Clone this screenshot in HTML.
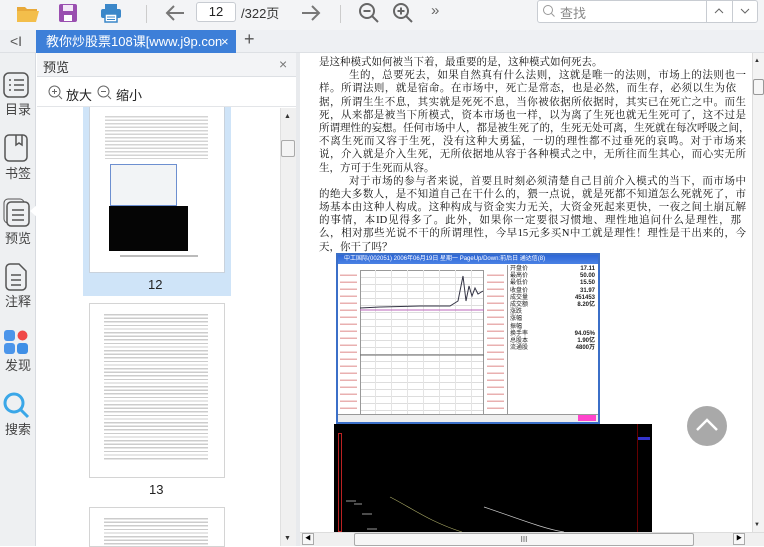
<!DOCTYPE html>
<html><head><meta charset="utf-8"><style>
*{margin:0;padding:0;box-sizing:border-box}
body{width:764px;height:546px;overflow:hidden;background:#fff;font-family:"Liberation Sans","Noto Sans CJK SC",sans-serif;position:relative}
.a{position:absolute}
.tb{left:0;top:0;width:764px;height:30px;background:#f3f4f6}
.tabbar{left:0;top:30px;width:764px;height:23px;background:#eef0f3;border-bottom:1px solid #dde0e4}
.side{left:0;top:53px;width:36px;height:493px;background:#eef0f2;border-right:1px solid #d8dbe0}
.lbl{font-size:13px;color:#444;width:36px;text-align:center;left:0}
.doc{font-family:"Liberation Serif","Noto Serif CJK SC",serif;font-size:10.5px;line-height:13.2px;color:#111;left:319px;top:56px;width:427px}
.doc div{white-space:nowrap;text-align:justify;text-align-last:justify;height:13.2px}
.doc div.s{text-align-last:left}
</style></head><body>
<div class="a tb"></div>
<svg class="a" style="left:16px;top:3px" width="24" height="20"><path d="M1 4h8l2 2h10v3H1z" fill="#e8a93a"/><path d="M1 8h22l-3 11H1z" fill="#f3be4b"/></svg>
<svg class="a" style="left:58px;top:3px" width="20" height="20"><rect x="1" y="1" width="18" height="18" rx="2" fill="#9a4fb0"/><rect x="5" y="2" width="10" height="6" fill="#f3e8f7"/><rect x="6" y="12" width="8" height="6" fill="#fff"/></svg>
<svg class="a" style="left:100px;top:3px" width="22" height="20"><rect x="5" y="1" width="12" height="5" fill="#3b87c9"/><rect x="1" y="6" width="20" height="9" rx="2" fill="#3b87c9"/><rect x="5" y="11" width="12" height="8" fill="#fff" stroke="#3b87c9" stroke-width="1.5"/><line x1="7" y1="14" x2="15" y2="14" stroke="#3b87c9"/><line x1="7" y1="16.5" x2="15" y2="16.5" stroke="#3b87c9"/></svg>
<div class="a" style="left:146px;top:5px;width:1px;height:18px;background:#ccc"></div>
<svg class="a" style="left:164px;top:3px" width="22" height="20"><path d="M20 10H3M10 3L3 10l7 7" fill="none" stroke="#777" stroke-width="2"/></svg>
<div class="a" style="left:196px;top:2px;width:40px;height:20px;border:1px solid #c8ccd2;border-radius:3px;background:#fff;font-size:13px;text-align:center;line-height:18px;color:#222">12</div>
<div class="a" style="left:241px;top:3px;font-size:13px;color:#333">/322页</div>
<svg class="a" style="left:300px;top:3px" width="22" height="20"><path d="M2 10h17M12 3l7 7-7 7" fill="none" stroke="#777" stroke-width="2"/></svg>
<div class="a" style="left:340px;top:5px;width:1px;height:18px;background:#ccc"></div>
<svg class="a" style="left:358px;top:2px" width="22" height="22"><circle cx="9" cy="9" r="7" fill="none" stroke="#666" stroke-width="2"/><path d="M14 14l6 6M5.5 9h7" stroke="#666" stroke-width="2"/></svg>
<svg class="a" style="left:392px;top:2px" width="22" height="22"><circle cx="9" cy="9" r="7" fill="none" stroke="#666" stroke-width="2"/><path d="M14 14l6 6M5.5 9h7M9 5.5v7" stroke="#666" stroke-width="2"/></svg>
<div class="a" style="left:431px;top:2px;font-size:15px;color:#666">»</div>
<div class="a" style="left:537px;top:0px;width:221px;height:23px;border:1px solid #c8ccd2;border-radius:3px;background:#fff"></div>
<svg class="a" style="left:542px;top:4px" width="14" height="14"><circle cx="6" cy="6" r="4.5" fill="none" stroke="#999"/><path d="M9.5 9.5l3 3" stroke="#999"/></svg>
<div class="a" style="left:560px;top:3px;font-size:13px;color:#888">查找</div>
<div class="a" style="left:706px;top:0;width:1px;height:23px;background:#c8ccd2"></div>
<div class="a" style="left:732px;top:0;width:1px;height:23px;background:#c8ccd2"></div>
<svg class="a" style="left:714px;top:7px" width="10" height="8"><path d="M1 6l4-4 4 4" fill="none" stroke="#666"/></svg>
<svg class="a" style="left:740px;top:7px" width="10" height="8"><path d="M1 2l4 4 4-4" fill="none" stroke="#666"/></svg>

<div class="a tabbar"></div>
<div class="a" style="left:10px;top:33px;font-size:14px;color:#555">&lt;I</div>
<div class="a" style="left:36px;top:30px;width:200px;height:23px;background:#3d7fd8;color:#fff;font-size:13px;line-height:23px;padding-left:10px;white-space:nowrap;overflow:hidden">教你炒股票108课[www.j9p.con<span style="position:absolute;left:185px;top:0">×</span></div>
<div class="a" style="left:244px;top:29px;font-size:18px;color:#555">+</div>

<div class="a side"></div>
<svg class="a" style="left:3px;top:72px" width="26" height="26"><rect x="1" y="1" width="24" height="24" rx="5" fill="none" stroke="#555" stroke-width="1.5"/><path d="M6 8h2M11 8h10M6 13h2M11 13h10M6 18h2M11 18h10" stroke="#555" stroke-width="1.5"/></svg>
<div class="a lbl" style="top:99px">目录</div>
<svg class="a" style="left:4px;top:134px" width="24" height="28"><rect x="1" y="1" width="22" height="26" rx="4" fill="none" stroke="#555" stroke-width="1.5"/><path d="M12 1v10l3-2 3 2V1" fill="none" stroke="#555" stroke-width="1.5"/></svg>
<div class="a lbl" style="top:163px">书签</div>
<svg class="a" style="left:3px;top:198px" width="28" height="30"><rect x="1" y="1" width="20" height="24" rx="4" fill="none" stroke="#555"/><rect x="4" y="4" width="22" height="24" rx="4" fill="#eef0f2" stroke="#555" stroke-width="1.5"/><path d="M9 12h12M9 17h12M9 22h12" stroke="#555" stroke-width="1.5"/></svg>
<div class="a lbl" style="top:228px">预览</div>
<div class="a" style="left:30px;top:204px;width:8px;height:14px;background:#fff;clip-path:polygon(100% 0,0 50%,100% 100%)"></div>
<svg class="a" style="left:5px;top:263px" width="22" height="28"><path d="M1 5a4 4 0 014-4h9l7 7v15a4 4 0 01-4 4H5a4 4 0 01-4-4z" fill="none" stroke="#555" stroke-width="1.5"/><path d="M6 12h10M6 17h10M6 22h10" stroke="#555" stroke-width="1.5"/></svg>
<div class="a lbl" style="top:291px">注释</div>
<svg class="a" style="left:3px;top:329px" width="26" height="26"><rect x="1" y="1" width="11" height="11" rx="3" fill="#4b95ea"/><circle cx="19.5" cy="6.5" r="5" fill="#f04848"/><rect x="1" y="14" width="11" height="11" rx="3" fill="#4b95ea"/><rect x="14" y="14" width="11" height="11" rx="3" fill="#3f8fe6"/></svg>
<div class="a lbl" style="top:355px">发现</div>
<svg class="a" style="left:3px;top:392px" width="28" height="28"><circle cx="11" cy="11" r="9" fill="none" stroke="#3aa7e8" stroke-width="3"/><path d="M18 18l7 7" stroke="#3aa7e8" stroke-width="3"/></svg>
<div class="a lbl" style="top:419px">搜索</div>

<div class="a" style="left:37px;top:53px;width:259px;height:24px;background:#f3f4f6;border-bottom:1px solid #dde0e4"></div>
<div class="a" style="left:43px;top:57px;font-size:13px;color:#333">预览</div>
<div class="a" style="left:279px;top:56px;font-size:14px;color:#777">×</div>
<div class="a" style="left:37px;top:77px;width:259px;height:30px;background:#fff;border-bottom:1px solid #e3e5e8"></div>
<svg class="a" style="left:48px;top:85px" width="15" height="15"><circle cx="6.5" cy="6.5" r="5.5" fill="none" stroke="#666"/><path d="M11 11l3 3M4 6.5h5M6.5 4v5" stroke="#666"/></svg>
<div class="a" style="left:66px;top:85px;font-size:13px;color:#222">放大</div>
<svg class="a" style="left:97px;top:85px" width="15" height="15"><circle cx="6.5" cy="6.5" r="5.5" fill="none" stroke="#666"/><path d="M11 11l3 3M4 6.5h5" stroke="#666"/></svg>
<div class="a" style="left:116px;top:85px;font-size:13px;color:#222">缩小</div>
<div class="a" style="left:37px;top:108px;width:243px;height:438px;background:#fff"></div>
<div class="a" style="left:83px;top:107px;width:148px;height:189px;background:#cfe4f8"></div>
<div class="a" style="left:89px;top:107px;width:136px;height:166px;background:#fff;border:1px solid #c9d2dc;border-top:none"></div>
<div class="a" style="left:105px;top:115px;width:103px;height:44px;background:repeating-linear-gradient(#fff 0 1px,#d4d4d4 1px 2.4px,#fff 2.4px 3.5px)"></div>
<div class="a" style="left:110px;top:164px;width:67px;height:42px;background:#f2f4f6;border:1px solid #6d8fd0"></div>
<div class="a" style="left:109px;top:206px;width:79px;height:45px;background:#050505"></div>
<div class="a" style="left:120px;top:255px;width:78px;height:2px;background:#bbb"></div>
<div class="a" style="left:148px;top:277px;font-size:13px;color:#222">12</div>
<div class="a" style="left:89px;top:303px;width:136px;height:175px;background:#fff;border:1px solid #d4d4d4"></div>
<div class="a" style="left:104px;top:313px;width:104px;height:148px;background:repeating-linear-gradient(#fff 0 1px,#ccc 1px 2.3px,#fff 2.3px 3.6px)"></div>
<div class="a" style="left:149px;top:482px;font-size:13px;color:#222">13</div>
<div class="a" style="left:89px;top:507px;width:136px;height:40px;background:#fff;border:1px solid #d4d4d4"></div>
<div class="a" style="left:104px;top:517px;width:104px;height:29px;background:repeating-linear-gradient(#fff 0 1px,#ccc 1px 2.3px,#fff 2.3px 3.6px)"></div>
<div class="a" style="left:280px;top:108px;width:16px;height:438px;background:#f0f0f0;border-left:1px solid #e0e0e0"></div>
<div class="a" style="left:284px;top:113px;font-size:7px;color:#333">▲</div>
<div class="a" style="left:281px;top:140px;width:14px;height:17px;background:#f4f4f4;border:1px solid #aaa;border-radius:2px"></div>
<div class="a" style="left:284px;top:535px;font-size:7px;color:#333">▼</div>
<div class="a" style="left:296px;top:53px;width:4px;height:493px;background:#e8eaed"></div>

<div class="a doc">
<div class="s">是这种模式如何被当下着，最重要的是，这种模式如何死去。</div>
<div style="padding-left:30px">生的，总要死去，如果自然真有什么法则，这就是唯一的法则，市场上的法则也一</div>
<div style="padding-right:10px">样。所谓法则，就是宿命。在市场中，死亡是常态，也是必然，而生存，必须以生为依</div>
<div>据，所谓生生不息，其实就是死死不息，当你被依据所依据时，其实已在死亡之中。而生</div>
<div>死，从来都是被当下所模式，资本市场也一样，以为离了生死也就无生死可了，这不过是</div>
<div>所谓理性的妄想。任何市场中人，都是被生死了的，生死无处可离，生死就在每次呼吸之间，</div>
<div>不离生死而又容于生死，没有这种大勇猛，一切的理性都不过垂死的哀鸣。对于市场来</div>
<div>说，介入就是介入生死，无所依据地从容于各种模式之中，无所往而生其心，而心实无所</div>
<div class="s">生，方可于生死而从容。</div>
<div style="padding-left:30px">对于市场的参与者来说，首要且时刻必须清楚自己目前介入模式的当下，而市场中</div>
<div>的绝大多数人，是不知道自己在干什么的，猥一点说，就是死都不知道怎么死就死了，市</div>
<div>场基本由这种人构成。这种构成与资金实力无关，大资金死起来更快，一夜之间土崩瓦解</div>
<div style="padding-right:5px">的事情，本ID见得多了。此外，如果你一定要很习惯地、理性地追问什么是理性，那</div>
<div>么，相对那些光说不干的所谓理性，今早15元多买N中工就是理性！理性是干出来的，今</div>
<div class="s">天，你干了吗？</div>
</div>

<div class="a" style="left:336px;top:253px;width:264px;height:171px;background:#fff;border:2px solid #3b6fc8"></div>
<div class="a" style="left:338px;top:255px;width:260px;height:9px;background:linear-gradient(#2f67d6,#4a82e4);font-size:6px;color:#fff;line-height:9px;padding-left:6px;white-space:nowrap;overflow:hidden">中工国际(002051) 2006年06月19日 星期一 PageUp/Down:前后日 通达信(8)</div>
<div class="a" style="left:360px;top:270px;width:124px;height:145px;background:repeating-linear-gradient(#fff 0 6px,#ddd 6px 7px),#fff;border:1px solid #999"></div>
<div class="a" style="left:360px;top:270px;width:124px;height:145px;background:repeating-linear-gradient(90deg,transparent 0 15px,#e4e4e4 15px 16px)"></div>
<svg class="a" style="left:360px;top:270px" width="124" height="145"><path d="M0 38l20 -1 40 -1 30 0 8-5 5-25 3 25 3-15 3 10 3-8 3 6 5 -3" fill="none" stroke="#334" stroke-width="1"/><path d="M0 40h124" stroke="#b6b" /><path d="M0 85h124" stroke="#666"/></svg>
<div class="a" style="left:340px;top:270px;width:17px;height:145px;background:repeating-linear-gradient(#fff 0 4.5px,#e9b0b0 4.5px 6px,#fff 6px 7px)"></div>
<div class="a" style="left:487px;top:270px;width:17px;height:145px;background:repeating-linear-gradient(#fff 0 4.5px,#e9b0b0 4.5px 6px,#fff 6px 7px)"></div>
<div class="a" style="left:507px;top:265px;width:91px;height:150px;border-left:1px solid #999"></div>
<div class="a" style="left:510px;top:266px;font-size:6px;line-height:7.2px;color:#222">开盘价<br>最高价<br>最低价<br>收盘价<br>成交量<br>成交额<br>涨跌<br>涨幅<br>振幅<br>换手率<br>总股本<br>流通股</div>
<div class="a" style="left:565px;top:266px;font-size:6px;line-height:7.2px;color:#222;text-align:right;width:30px;font-weight:bold">17.11<br>50.00<br>15.50<br>31.97<br>451453<br>8.20亿<br><br><br><br>94.05%<br>1.90亿<br>4800万</div>
<div class="a" style="left:338px;top:414px;width:260px;height:8px;background:#eee;border-top:1px solid #999"></div>
<div class="a" style="left:578px;top:415px;width:18px;height:6px;background:#f4c"></div>

<div class="a" style="left:334px;top:424px;width:318px;height:108px;background:#000"></div>
<div class="a" style="left:338px;top:433px;width:4px;height:99px;border:1px solid #b22"></div>
<svg class="a" style="left:334px;top:424px" width="318" height="108"><path d="M12 77h10M20 80h8M28 90h10M33 105h10M150 83c30 10 60 22 80 25" fill="none" stroke="#ccc" stroke-width="0.7"/><path d="M56 73c20 10 40 25 72 35" stroke="#aa6" fill="none" stroke-width="0.6"/></svg>
<div class="a" style="left:637px;top:424px;width:15px;height:108px;border-left:1px solid #600"></div>
<div class="a" style="left:638px;top:437px;width:12px;height:3px;background:#33c"></div>

<div class="a" style="left:687px;top:406px;width:40px;height:40px;border-radius:50%;background:#a9a9a9"></div>
<svg class="a" style="left:687px;top:406px" width="40" height="40"><path d="M10 24l10-10 10 10" fill="none" stroke="#fff" stroke-width="2.5"/></svg>

<div class="a" style="left:752px;top:53px;width:12px;height:479px;background:#f3f3f3;border-left:1px solid #ddd"></div>
<div class="a" style="left:754px;top:58px;font-size:6px;color:#333">▲</div>
<div class="a" style="left:753px;top:79px;width:11px;height:16px;background:#f6f6f6;border:1px solid #999;border-radius:2px"></div>
<div class="a" style="left:754px;top:522px;font-size:6px;color:#333">▼</div>
<div class="a" style="left:300px;top:532px;width:464px;height:14px;background:#f0f0f0;border-top:1px solid #ddd"></div>
<div class="a" style="left:302px;top:533px;width:12px;height:12px;border:1px solid #aaa;background:#f8f8f8;font-size:6px;line-height:11px;text-align:center">◀</div>
<div class="a" style="left:354px;top:533px;width:340px;height:13px;background:#f6f6f6;border:1px solid #aaa;border-radius:2px;font-size:8px;text-align:center;line-height:11px;color:#555">III</div>
<div class="a" style="left:733px;top:533px;width:12px;height:12px;border:1px solid #aaa;background:#f8f8f8;font-size:6px;line-height:11px;text-align:center">▶</div>
</body></html>
